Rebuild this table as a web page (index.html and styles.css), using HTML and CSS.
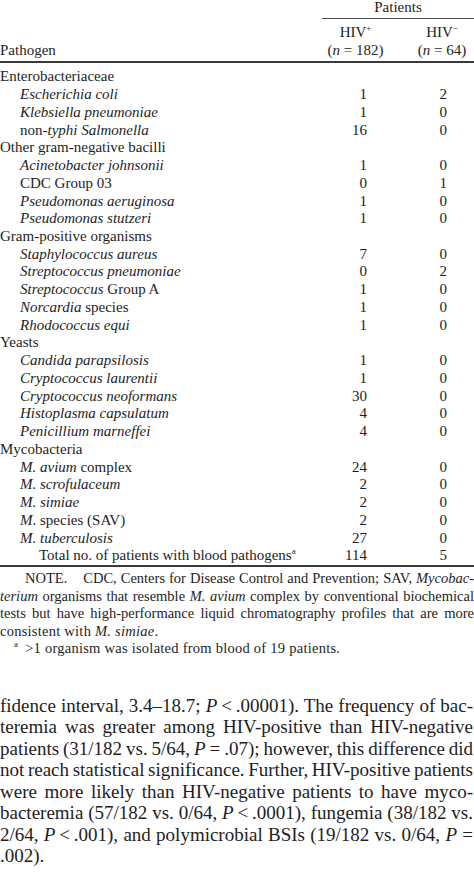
FILE: index.html
```html
<!DOCTYPE html>
<html>
<head>
<meta charset="utf-8">
<link rel="stylesheet" href="styles.css">
</head>
<body>
<div class="page">
<table class="tbl">
  <colgroup><col class="c-name"><col class="c-pos"><col class="c-neg"></colgroup>
  <thead>
    <tr class="h1"><th></th><th colspan="2" class="patients">Patients</th></tr>
    <tr class="h2">
      <th class="name">Pathogen</th>
      <th class="pos">HIV<sup>+</sup><br>(<i>n</i> = 182)</th>
      <th class="neg">HIV<sup>−</sup><br>(<i>n</i> = 64)</th>
    </tr>
  </thead>
  <tbody>
    <tr class="cat first"><td>Enterobacteriaceae</td><td></td><td></td></tr>
    <tr><td class="sp"><i>Escherichia coli</i></td><td class="n">1</td><td class="m">2</td></tr>
    <tr><td class="sp"><i>Klebsiella pneumoniae</i></td><td class="n">1</td><td class="m">0</td></tr>
    <tr><td class="sp">non-<i>typhi Salmonella</i></td><td class="n">16</td><td class="m">0</td></tr>
    <tr class="cat"><td>Other gram-negative bacilli</td><td></td><td></td></tr>
    <tr><td class="sp"><i>Acinetobacter johnsonii</i></td><td class="n">1</td><td class="m">0</td></tr>
    <tr><td class="sp">CDC Group 03</td><td class="n">0</td><td class="m">1</td></tr>
    <tr><td class="sp"><i>Pseudomonas aeruginosa</i></td><td class="n">1</td><td class="m">0</td></tr>
    <tr><td class="sp"><i>Pseudomonas stutzeri</i></td><td class="n">1</td><td class="m">0</td></tr>
    <tr class="cat"><td>Gram-positive organisms</td><td></td><td></td></tr>
    <tr><td class="sp"><i>Staphylococcus aureus</i></td><td class="n">7</td><td class="m">0</td></tr>
    <tr><td class="sp"><i>Streptococcus pneumoniae</i></td><td class="n">0</td><td class="m">2</td></tr>
    <tr><td class="sp"><i>Streptococcus</i> Group A</td><td class="n">1</td><td class="m">0</td></tr>
    <tr><td class="sp"><i>Norcardia</i> species</td><td class="n">1</td><td class="m">0</td></tr>
    <tr><td class="sp"><i>Rhodococcus equi</i></td><td class="n">1</td><td class="m">0</td></tr>
    <tr class="cat"><td>Yeasts</td><td></td><td></td></tr>
    <tr><td class="sp"><i>Candida parapsilosis</i></td><td class="n">1</td><td class="m">0</td></tr>
    <tr><td class="sp"><i>Cryptococcus laurentii</i></td><td class="n">1</td><td class="m">0</td></tr>
    <tr><td class="sp"><i>Cryptococcus neoformans</i></td><td class="n">30</td><td class="m">0</td></tr>
    <tr><td class="sp"><i>Histoplasma capsulatum</i></td><td class="n">4</td><td class="m">0</td></tr>
    <tr><td class="sp"><i>Penicillium marneffei</i></td><td class="n">4</td><td class="m">0</td></tr>
    <tr class="cat"><td>Mycobacteria</td><td></td><td></td></tr>
    <tr><td class="sp"><i>M. avium</i> complex</td><td class="n">24</td><td class="m">0</td></tr>
    <tr><td class="sp"><i>M. scrofulaceum</i></td><td class="n">2</td><td class="m">0</td></tr>
    <tr><td class="sp"><i>M. simiae</i></td><td class="n">2</td><td class="m">0</td></tr>
    <tr><td class="sp"><i>M</i>. species (SAV)</td><td class="n">2</td><td class="m">0</td></tr>
    <tr><td class="sp"><i>M. tuberculosis</i></td><td class="n">27</td><td class="m">0</td></tr>
    <tr class="total"><td class="tot">Total no. of patients with blood pathogens<sup>a</sup></td><td class="n">114</td><td class="m">5</td></tr>
  </tbody>
</table>

<div class="note">
  <span class="ln"><span class="lbl">NOTE.</span> CDC, Centers for Disease Control and Prevention; SAV, <i>Mycobac-</i></span>
  <span class="ln"><i>terium</i> organisms that resemble <i>M. avium</i> complex by conventional biochemical</span>
  <span class="ln">tests but have high-performance liquid chromatography profiles that are more</span>
  <span class="ln end wide">consistent with <i>M. simiae</i>.</span>
  <span class="ln end wide foot"><sup>a</sup> &gt;1 organism was isolated from blood of 19 patients.</span>
</div>

<div class="para">
  <span class="ln">fidence interval, 3.4–18.7; <i>P</i>&thinsp;&lt;&thinsp;.00001). The frequency of bac-</span>
  <span class="ln">teremia was greater among HIV-positive than HIV-negative</span>
  <span class="ln">patients (31/182 vs. 5/64, <i>P</i> = .07); however, this difference did</span>
  <span class="ln">not reach statistical significance. Further, HIV-positive patients</span>
  <span class="ln">were more likely than HIV-negative patients to have myco-</span>
  <span class="ln">bacteremia (57/182 vs. 0/64, <i>P</i>&thinsp;&lt;&thinsp;.0001), fungemia (38/182 vs.</span>
  <span class="ln">2/64, <i>P</i>&thinsp;&lt;&thinsp;.001), and polymicrobial BSIs (19/182 vs. 0/64, <i>P</i> =</span>
  <span class="ln end">.002).</span>
</div>
</div>
</body>
</html>
```

FILE: styles.css
```css
* { box-sizing: border-box; }
html, body { margin: 0; padding: 0; background: #ffffff; }
body {
  font-family: "Liberation Serif", "Times New Roman", serif;
  color: #1e1e1e;
}
.page { width: 474px; overflow: hidden; }

.tbl {
  width: 474px;
  table-layout: fixed;
  border-collapse: separate;
  border-spacing: 0;
  font-size: 15px;
  line-height: 17.74px;
}
.c-name { width: 322px; }
.c-pos { width: 78px; }
.c-neg { width: 74px; }

th { font-weight: normal; padding: 0; }
td { padding: 0; white-space: nowrap; }

.patients {
  text-align: center;
  vertical-align: top;
  height: 18.5px;
  line-height: 14px;
  border-bottom: 1.5px solid #4a4a4a;
}
.h2 th {
  line-height: 18.7px;
  padding-top: 4px;
  padding-bottom: 1.5px;
  vertical-align: bottom;
  border-bottom: 2px solid #3a3a3a;
}
.h2 .name { text-align: left; }
.h2 .pos { text-align: center; padding-right: 11px; }
.h2 .neg { text-align: center; padding-left: 10px; }
sup { font-size: 9px; line-height: 0; vertical-align: 6px; }

.first td { padding-top: 5px; }
.sp { padding-left: 20px; }
.tot { padding-left: 39px; }
.n { text-align: right; padding-right: 33px; }
.m { text-align: right; padding-right: 27px; }
.total td { border-bottom: 2px solid #3a3a3a; padding-bottom: 0; }

.note {
  font-size: 14.5px;
  line-height: 17.6px;
  padding-top: 3px;
  word-spacing: -0.6px;
}
.ln {
  display: block;
  white-space: nowrap;
  text-align: justify;
  text-align-last: justify;
}
.ln.end { text-align: left; text-align-last: left; }
.note .wide { word-spacing: 0; letter-spacing: 0.25px; }
.note .ln:first-child { padding-left: 25px; }
.lbl { margin-right: 12px; }
.foot { padding-left: 14px; }
.foot sup { margin-right: 3px; }

.para {
  font-size: 19px;
  line-height: 21.5px;
  padding-top: 37px;
  word-spacing: -1.2px;
  padding-right: 1px;
}
```
